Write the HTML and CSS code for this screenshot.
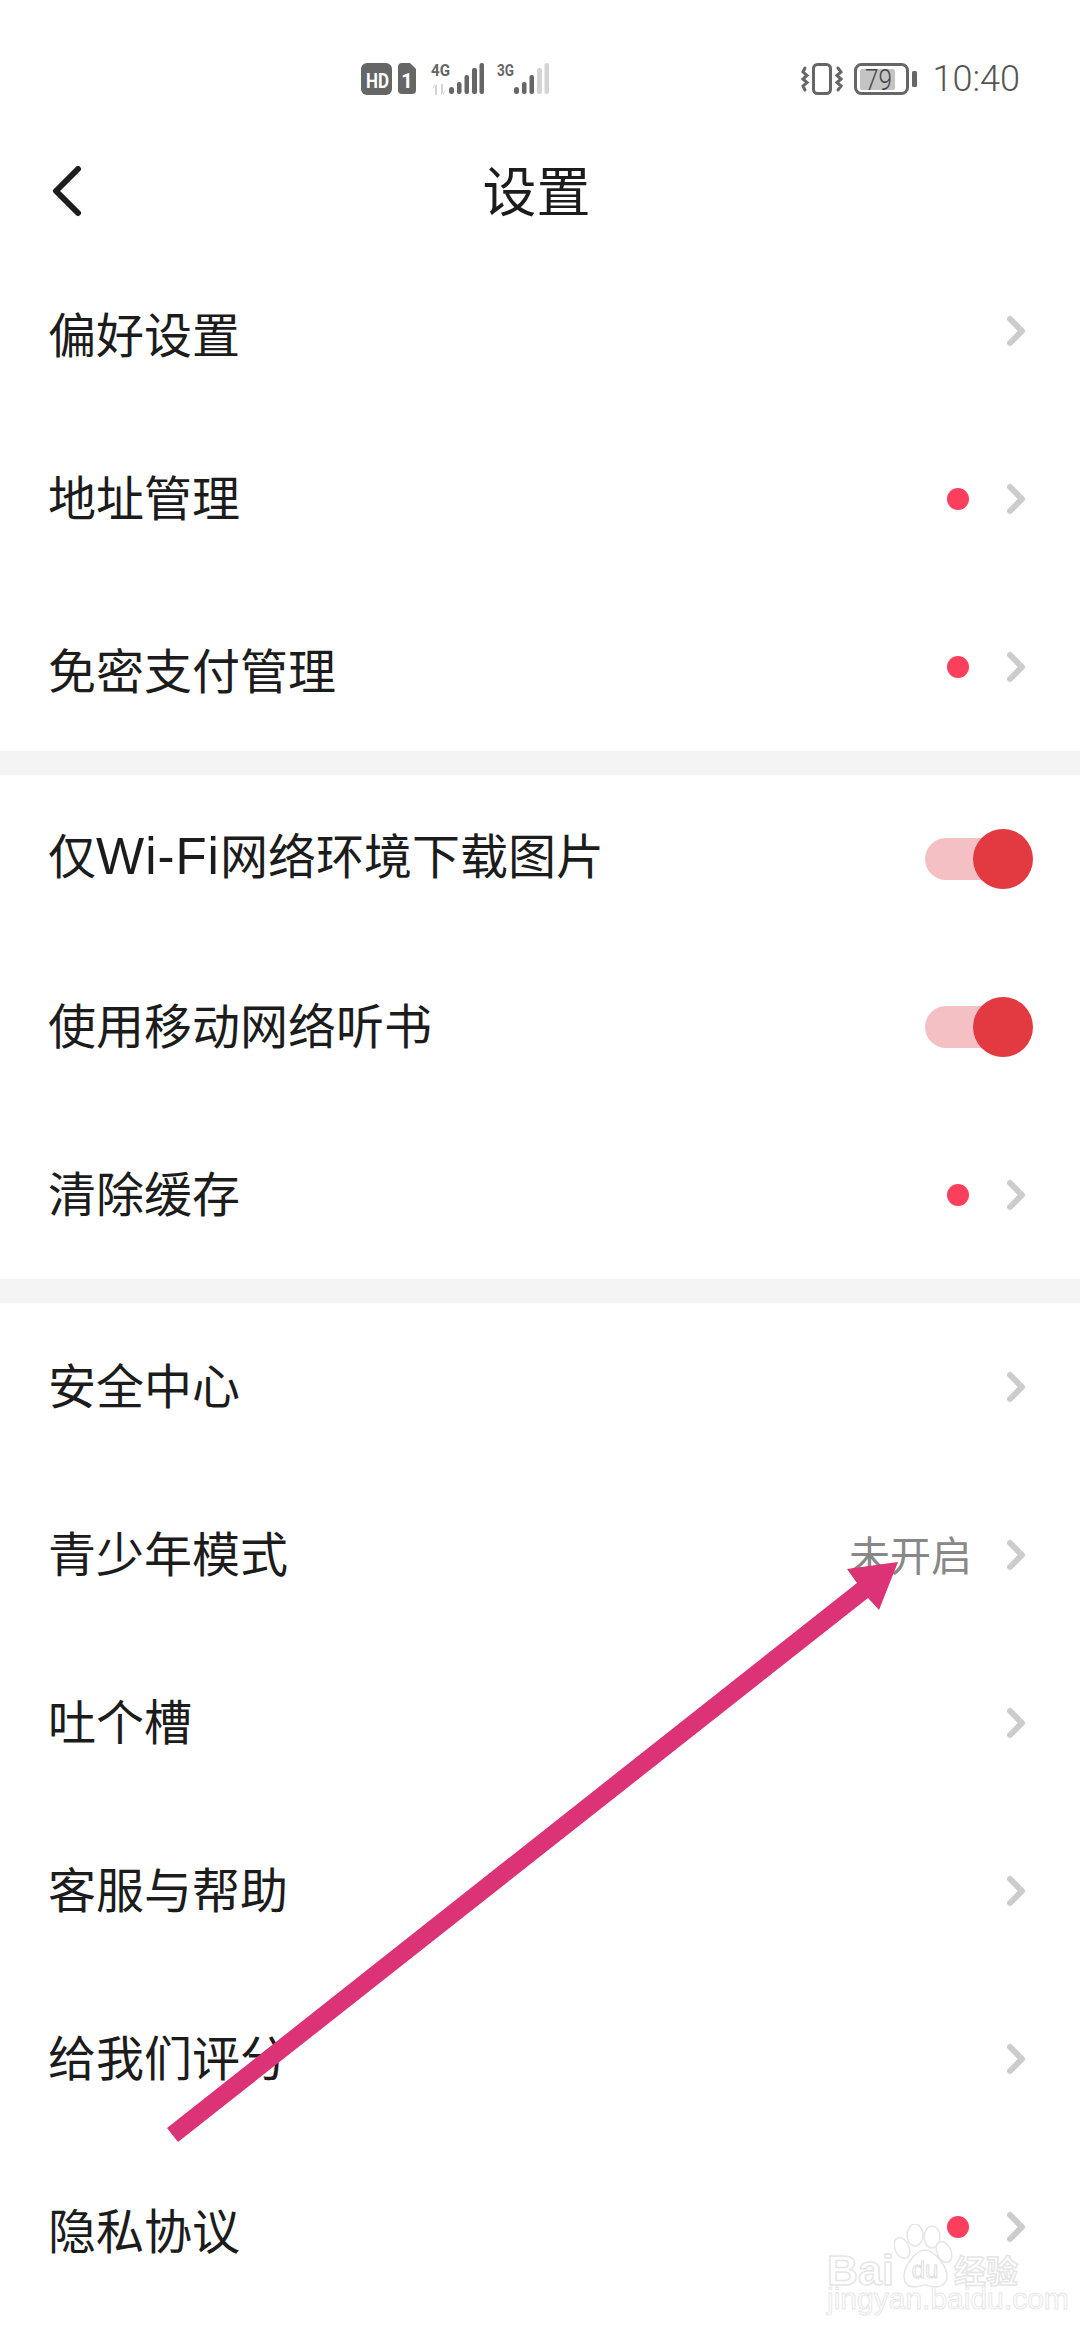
FILE: index.html
```html
<!DOCTYPE html>
<html lang="zh-CN">
<head>
<meta charset="utf-8">
<title>设置</title>
<link rel="stylesheet" href="styles.css">
</head>
<body>
<div class="page">
  <header class="status">
    <svg class="status-left" viewBox="360 60 192 38" width="192" height="38">
      <rect x="361" y="63" width="31" height="32" rx="6" fill="#666"/>
      <text x="366" y="88" class="st-hd" textLength="23" lengthAdjust="spacingAndGlyphs">HD</text>
      <path d="M402 63h8l6 6v21a4 4 0 0 1-4 4h-10a4 4 0 0 1-4-4V67a4 4 0 0 1 4-4z" fill="#666"/>
      <text x="407" y="88" class="st-hd" text-anchor="middle">1</text>
      <text x="431" y="76" class="st-net" textLength="19" lengthAdjust="spacingAndGlyphs">4G</text>
      <path d="M431 90l4-6v11h2V84l0 0zM447 89l-4 6V84h-2v11z" fill="#d4d4d4"/>
      <g fill="#666">
        <rect x="449" y="87" width="5" height="7" rx="2.500"/>
        <rect x="457" y="82" width="4.500" height="12" rx="2"/>
        <rect x="464.500" y="75" width="4.500" height="19" rx="2"/>
        <rect x="472" y="68" width="5" height="26" rx="2"/>
        <rect x="479.500" y="63" width="4.500" height="31" rx="2"/>
      </g>
      <text x="497" y="76" class="st-net" textLength="17" lengthAdjust="spacingAndGlyphs">3G</text>
      <g fill="#666">
        <rect x="514" y="87" width="5" height="7" rx="2.500"/>
        <rect x="522" y="82" width="4.500" height="12" rx="2"/>
        <rect x="529.500" y="75" width="4.500" height="19" rx="2"/>
      </g>
      <g fill="#d4d4d4">
        <rect x="537" y="68" width="5" height="26" rx="2"/>
        <rect x="544.500" y="63" width="4.500" height="31" rx="2"/>
      </g>
    </svg>
    <div class="status-right">
      <svg viewBox="800 60 120 38" width="120" height="38">
        <rect x="813.500" y="64.500" width="17" height="29" rx="4" fill="none" stroke="#666" stroke-width="3"/>
        <path d="M805 68l-2 4 4 3.500-4 3.500 4 3.500-4 3.500 2 4M838 68l3 4-4 3.500 4 3.500-4 3.500 4 3.500-3 4" fill="none" stroke="#666" stroke-width="3" stroke-linecap="round"/>
        <rect x="855.500" y="64.500" width="52" height="29" rx="6" fill="none" stroke="#666" stroke-width="3"/>
        <rect x="860" y="69" width="35" height="21" rx="2" fill="#c4c4c4"/>
        <text x="865" y="90" class="st-batt" textLength="27" lengthAdjust="spacingAndGlyphs">79</text>
        <rect x="912" y="71" width="5" height="16" rx="1.500" fill="#666"/>
      </svg>
      <span class="time">10:40</span>
    </div>
  </header>

  <nav class="nav">
    <svg class="back" viewBox="0 0 32 52" width="32" height="52"><path d="M27 3L5 25l22 22" fill="none" stroke="#1c1c1c" stroke-width="6" stroke-linecap="round" stroke-linejoin="round"/></svg>
    <h1 class="title">设置</h1>
  </nav>

  <section class="group">
    <div class="row"><span class="label low">偏好设置</span><svg class="chev" viewBox="0 0 20 32" width="20" height="32"><path d="M3 4l12 12L3 28" fill="none" stroke="#ccc" stroke-width="6" stroke-linecap="round" stroke-linejoin="round"/></svg></div>
    <div class="row"><span class="label">地址管理</span><i class="dot"></i><svg class="chev" viewBox="0 0 20 32" width="20" height="32"><path d="M3 4l12 12L3 28" fill="none" stroke="#ccc" stroke-width="6" stroke-linecap="round" stroke-linejoin="round"/></svg></div>
    <div class="row"><span class="label low">免密支付管理</span><i class="dot"></i><svg class="chev" viewBox="0 0 20 32" width="20" height="32"><path d="M3 4l12 12L3 28" fill="none" stroke="#ccc" stroke-width="6" stroke-linecap="round" stroke-linejoin="round"/></svg></div>
  </section>

  <section class="group">
    <div class="row"><span class="label">仅<span class="latin">Wi-Fi</span>网络环境下载图片</span><div class="switch"><i class="knob"></i></div></div>
    <div class="row"><span class="label">使用移动网络听书</span><div class="switch"><i class="knob"></i></div></div>
    <div class="row"><span class="label">清除缓存</span><i class="dot"></i><svg class="chev" viewBox="0 0 20 32" width="20" height="32"><path d="M3 4l12 12L3 28" fill="none" stroke="#ccc" stroke-width="6" stroke-linecap="round" stroke-linejoin="round"/></svg></div>
  </section>

  <section class="group">
    <div class="row"><span class="label">安全中心</span><svg class="chev" viewBox="0 0 20 32" width="20" height="32"><path d="M3 4l12 12L3 28" fill="none" stroke="#ccc" stroke-width="6" stroke-linecap="round" stroke-linejoin="round"/></svg></div>
    <div class="row"><span class="label">青少年模式</span><span class="value">未开启</span><svg class="chev" viewBox="0 0 20 32" width="20" height="32"><path d="M3 4l12 12L3 28" fill="none" stroke="#ccc" stroke-width="6" stroke-linecap="round" stroke-linejoin="round"/></svg></div>
    <div class="row"><span class="label">吐个槽</span><svg class="chev" viewBox="0 0 20 32" width="20" height="32"><path d="M3 4l12 12L3 28" fill="none" stroke="#ccc" stroke-width="6" stroke-linecap="round" stroke-linejoin="round"/></svg></div>
    <div class="row"><span class="label">客服与帮助</span><svg class="chev" viewBox="0 0 20 32" width="20" height="32"><path d="M3 4l12 12L3 28" fill="none" stroke="#ccc" stroke-width="6" stroke-linecap="round" stroke-linejoin="round"/></svg></div>
    <div class="row"><span class="label">给我们评分</span><svg class="chev" viewBox="0 0 20 32" width="20" height="32"><path d="M3 4l12 12L3 28" fill="none" stroke="#ccc" stroke-width="6" stroke-linecap="round" stroke-linejoin="round"/></svg></div>
    <div class="row"><span class="label low">隐私协议</span><i class="dot"></i><svg class="chev" viewBox="0 0 20 32" width="20" height="32"><path d="M3 4l12 12L3 28" fill="none" stroke="#ccc" stroke-width="6" stroke-linecap="round" stroke-linejoin="round"/></svg></div>
  </section>

  <svg class="arrow" viewBox="0 0 1080 2340" width="1080" height="2340">
    <polygon points="167,2128 178,2142 868,1598 879,1610 898,1562 847,1569 857,1583" fill="#dc3276"/>
  </svg>

  <div class="watermark">
    <div class="wm-top">
      <span class="wm-bai">Bai</span>
      <svg class="wm-paw" viewBox="0 0 60 64" width="60" height="64">
        <g fill="#fff" stroke="#e6e6e6" stroke-width="1.500">
          <ellipse cx="8" cy="24" rx="7" ry="11" transform="rotate(-25 8 24)"/>
          <ellipse cx="21" cy="11" rx="8" ry="11"/>
          <ellipse cx="38" cy="13" rx="8" ry="11"/>
          <ellipse cx="50" cy="28" rx="7" ry="11" transform="rotate(-25 50 28)"/>
          <path d="M31 26c9 0 22 16 22 26 0 8-6 11-12 11-4 0-7-2-10-2s-6 2-10 2c-6 0-11-3-11-11 0-10 12-26 21-26z"/>
        </g>
        <text x="31" y="54" class="wm-du" text-anchor="middle">du</text>
      </svg>
      <span class="wm-jy">经验</span>
    </div>
    <div class="wm-url">jingyan.baidu.com</div>
  </div>
</div>
</body>
</html>
```
FILE: styles.css
```css
* { box-sizing: border-box; }
html, body { margin: 0; padding: 0; background: #fff; }
.page {
  position: relative;
  width: 1080px;
  height: 2340px;
  overflow: hidden;
  background: #fff;
  font-family: "Noto Sans CJK SC", "Noto Sans", sans-serif;
  color: #1c1c1c;
}

/* status bar */
.status {
  display: flex;
  align-items: flex-start;
  height: 137px;
  padding: 60px 60px 0 360px;
}
.status-left, .status-right svg { display: block; }
.status-right {
  display: flex;
  align-items: center;
  margin-left: auto;
}
.st-hd { font: 700 20px "Roboto", sans-serif; fill: #fff; }
.st-net { font: 700 17px "Roboto", sans-serif; fill: #666; }
.st-batt { font: 300 29px "Roboto", sans-serif; fill: #444; }
.time {
  margin-left: 13px;
  font: 300 36px/38px "Roboto", sans-serif;
  color: #555;
}

/* nav */
.nav {
  display: grid;
  grid-template-columns: 1fr auto 1fr;
  align-items: center;
  height: 110px;
  padding: 0 58px 0 51px;
}
.back { display: block; }
.title {
  margin: 0;
  padding-bottom: 6px;
  font-size: 54px;
  font-weight: 400;
  line-height: 70px;
}

/* list */
.group { border-bottom: 24px solid #f4f4f4; }
.group:last-of-type { border-bottom: 0; }
.row {
  display: flex;
  align-items: center;
  height: 168px;
  padding: 0 47px 0 48px;
}
.label {
  flex: 1;
  padding-bottom: 8px;
  font-size: 48px;
  line-height: 64px;
  white-space: nowrap;
}
.latin { font-family: "Liberation Sans", sans-serif; font-size: 51px; letter-spacing: 1px; }
.low { padding-top: 10px; }
.dot {
  width: 22px;
  height: 22px;
  margin-right: 38px;
  border-radius: 50%;
  background: #fb3f5d;
}
.value {
  margin-right: 35px;
  padding-bottom: 4px;
  font-size: 41px;
  line-height: 56px;
  color: #888;
}
.chev { display: block; margin-right: 6px; }
.switch {
  position: relative;
  width: 88px;
  height: 42px;
  margin-right: 20px;
  border-radius: 21px;
  background: #f4c0c3;
}
.knob {
  position: absolute;
  top: -9px;
  right: -20px;
  width: 60px;
  height: 60px;
  border-radius: 50%;
  background: #e33a42;
}

/* annotation overlay */
.arrow { position: absolute; left: 0; top: 0; pointer-events: none; }

/* watermark */
.watermark {
  position: absolute;
  left: 827px;
  top: 2224px;
  width: 200px;
  color: #fff;
}
.wm-top { display: flex; align-items: flex-end; height: 64px; }
.wm-bai {
  margin-bottom: -5px;
  font: 700 43px/46px "Liberation Sans", sans-serif;
  -webkit-text-stroke: 1.5px #e6e6e6;
}
.wm-paw { display: block; flex: none; }
.wm-du { font: 400 24px "Liberation Sans", sans-serif; fill: #fff; stroke: #e0e0e0; stroke-width: 1px; }
.wm-jy {
  margin-bottom: -2px;
  font-size: 32px;
  line-height: 42px;
  font-weight: 700;
  -webkit-text-stroke: 1.5px #e6e6e6;
}
.wm-url {
  margin-top: -6px;
  font: 400 30px/34px "Liberation Sans", sans-serif;
  -webkit-text-stroke: 1px #e8e8e8;
  white-space: nowrap;
}
```
